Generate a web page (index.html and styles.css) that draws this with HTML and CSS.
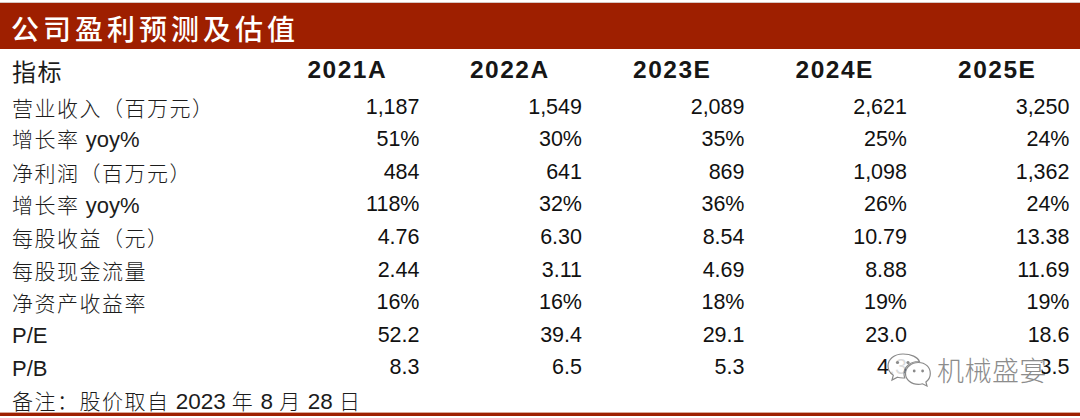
FILE: index.html
```html
<!DOCTYPE html>
<html lang="zh">
<head>
<meta charset="utf-8">
<title>公司盈利预测及估值</title>
<link rel="stylesheet" href="styles.css">
</head>
<body>
<div class="page">
  <div class="topline"></div>
  <div class="titlebar"><span class="title">公司盈利预测及估值</span></div>
  <div class="table">
    <div class="row head">
      <div class="label">指标</div>
      <div class="cell">2021A</div>
      <div class="cell">2022A</div>
      <div class="cell">2023E</div>
      <div class="cell">2024E</div>
      <div class="cell">2025E</div>
    </div>
    <div class="row">
      <div class="label">营业收入（百万元）</div>
      <div class="cell">1,187</div><div class="cell">1,549</div><div class="cell">2,089</div><div class="cell">2,621</div><div class="cell">3,250</div>
    </div>
    <div class="row">
      <div class="label">增长率 <span class="latin">yoy%</span></div>
      <div class="cell">51%</div><div class="cell">30%</div><div class="cell">35%</div><div class="cell">25%</div><div class="cell">24%</div>
    </div>
    <div class="row">
      <div class="label">净利润（百万元）</div>
      <div class="cell">484</div><div class="cell">641</div><div class="cell">869</div><div class="cell">1,098</div><div class="cell">1,362</div>
    </div>
    <div class="row">
      <div class="label">增长率 <span class="latin">yoy%</span></div>
      <div class="cell">118%</div><div class="cell">32%</div><div class="cell">36%</div><div class="cell">26%</div><div class="cell">24%</div>
    </div>
    <div class="row">
      <div class="label">每股收益（元）</div>
      <div class="cell">4.76</div><div class="cell">6.30</div><div class="cell">8.54</div><div class="cell">10.79</div><div class="cell">13.38</div>
    </div>
    <div class="row">
      <div class="label">每股现金流量</div>
      <div class="cell">2.44</div><div class="cell">3.11</div><div class="cell">4.69</div><div class="cell">8.88</div><div class="cell">11.69</div>
    </div>
    <div class="row">
      <div class="label">净资产收益率</div>
      <div class="cell">16%</div><div class="cell">16%</div><div class="cell">18%</div><div class="cell">19%</div><div class="cell">19%</div>
    </div>
    <div class="row">
      <div class="label"><span class="latin">P/E</span></div>
      <div class="cell">52.2</div><div class="cell">39.4</div><div class="cell">29.1</div><div class="cell">23.0</div><div class="cell">18.6</div>
    </div>
    <div class="row">
      <div class="label"><span class="latin">P/B</span></div>
      <div class="cell">8.3</div><div class="cell">6.5</div><div class="cell">5.3</div><div class="cell">4.3</div><div class="cell">3.5</div>
    </div>
  </div>
  <div class="note">备注：股价取自 <span class="latin">2023</span> 年 <span class="latin">8</span> 月 <span class="latin">28</span> 日</div>
  <div class="bottomline"></div>

  <div class="watermark">
    <svg class="wm-icon" width="46" height="36" viewBox="0 0 46 36">
      <path d="M17 3 C8 3 2 8.5 2 15 C2 18.8 4 22 7.3 24.2 L6 29 L11.5 26.2 C13.3 26.8 15.1 27 17 27 C17.6 27 18.2 27 18.8 26.9 C18.3 25.6 18 24.2 18 22.8 C18 15.5 24.6 10.5 32.4 10.5 C32.8 10.5 33.2 10.5 33.5 10.6 C31.8 6.1 25.2 3 17 3 Z" fill="rgba(255,255,255,0.85)" stroke="#8a8a8a" stroke-width="1.2"/>
      <circle cx="11.5" cy="11.5" r="1.6" fill="#8a8a8a"/>
      <circle cx="22" cy="11.5" r="1.6" fill="#8a8a8a"/>
      <path d="M32.4 11.5 C25.3 11.5 19.5 16.3 19.5 22.5 C19.5 28.6 25.3 33.4 32.4 33.4 C33.8 33.4 35.2 33.2 36.5 32.8 L41 35 L39.9 31 C42.6 29 44.3 26 44.3 22.5 C44.3 16.3 39.5 11.5 32.4 11.5 Z" fill="rgba(255,255,255,0.85)" stroke="#8a8a8a" stroke-width="1.2"/>
      <circle cx="28.2" cy="20" r="1.4" fill="#8a8a8a"/>
      <circle cx="36.6" cy="20" r="1.4" fill="#8a8a8a"/>
    </svg>
    <span class="wm-text">机械盛宴</span>
  </div>
</div>
</body>
</html>
```

FILE: styles.css
```css
html, body {
  margin: 0;
  padding: 0;
  background: #ffffff;
}

.page {
  position: relative;
  width: 1080px;
  height: 418px;
  font-family: "Liberation Sans", Arial, "Noto Sans CJK SC", sans-serif;
  color: #141414;
}

.topline {
  margin-top: 2px;
  height: 1px;
  background: #d6c6c2;
}

.titlebar {
  height: 46px;
  background: #9e1f00;
  display: flex;
  align-items: center;
  padding-left: 11px;
  box-sizing: border-box;
}

.title {
  color: #ffffff;
  font-family: "Noto Sans CJK SC", sans-serif;
  font-size: 28px;
  font-weight: 500;
  letter-spacing: 4px;
  line-height: 1;
  margin-top: 4px;
}

.table {
  display: flex;
  flex-direction: column;
}

.row {
  display: grid;
  grid-template-columns: 266px repeat(5, 162.5px);
  height: 32.6px;
  align-items: center;
}

.row.head {
  height: 42px;
}

.label {
  padding-left: 12px;
  font-family: "Noto Sans CJK SC", sans-serif;
  font-size: 21px;
  font-weight: 300;
  letter-spacing: 1.5px;
  line-height: 1;
  color: #1c1c1c;
  white-space: nowrap;
}

.latin {
  font-family: "Liberation Sans", Arial, sans-serif;
  font-weight: 400;
  letter-spacing: 0;
  font-size: 22px;
}

.cell {
  text-align: right;
  padding-right: 9px;
  font-size: 21.5px;
  line-height: 1;
  color: #111111;
}

.row.head .label {
  font-size: 24px;
  letter-spacing: 1.5px;
  font-weight: 400;
  padding-top: 2px;
}

.row.head .cell {
  text-align: center;
  padding-right: 0;
  font-weight: 700;
  font-size: 24.5px;
  letter-spacing: 1.5px;
  color: #161616;
  padding-top: 1px;
}

.note {
  height: 27.6px;
  box-sizing: border-box;
  padding-top: 4px;
  padding-left: 12px;
  font-family: "Noto Sans CJK SC", sans-serif;
  font-size: 21px;
  font-weight: 300;
  letter-spacing: 1.5px;
  line-height: 24px;
  color: #1c1c1c;
  white-space: nowrap;
}

.note .latin {
  font-size: 22.5px;
  letter-spacing: 0;
}

.bottomline {
  height: 3px;
  border-top: 1px solid #d8a898;
  background: #9e1f00;
}

.watermark {
  position: absolute;
  left: 886px;
  top: 349px;
  display: flex;
  align-items: center;
  gap: 5px;
}

.wm-icon {
  display: block;
}

.wm-text {
  font-family: "Noto Sans CJK SC", sans-serif;
  font-size: 27px;
  font-weight: 300;
  letter-spacing: 0.5px;
  color: #8c8c8c;
  text-shadow: 1px 1px 0 rgba(255,255,255,0.9), -1px 0 0 rgba(255,255,255,0.7);
  line-height: 1;
}
```
